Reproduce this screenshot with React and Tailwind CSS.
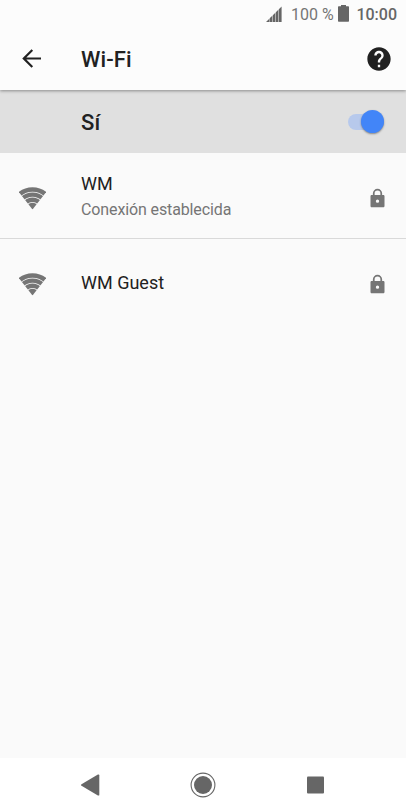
function SignalIcon() {
  return (
    <svg className="h-4 w-4 -translate-y-px" viewBox="0 0 16 16" fill="#666">
      <path d="M0 16 3.3 12.7V16ZM3.7 12.3 6.3 9.7V16H3.7ZM6.8 9.2 9.3 6.7V16H6.8ZM9.8 6.2 12.3 3.7V16H9.8ZM12.8 3.2 15.6 .4V16H12.8Z" />
    </svg>
  );
}

function BatteryIcon() {
  return (
    <svg className="h-[17px] w-[11px]" viewBox="0 0 11 17" fill="#666">
      <path d="M3 0H8V1.2H10.3A.7.7 0 0 1 11 1.9V16A.7.7 0 0 1 10.3 16.7H.7A.7.7 0 0 1 0 16V1.9A.7.7 0 0 1 .7 1.2H3Z" />
    </svg>
  );
}

function WifiIcon() {
  return (
    <svg className="h-[23px] w-[27px] shrink-0" viewBox="-13.5 -22.5 27 23">
      <defs>
        <clipPath id="wedge">
          <path d="M0 0 -15.6 -20 V-24 H15.6 V-20Z" />
        </clipPath>
      </defs>
      <g clipPath="url(#wedge)" fill="none" stroke="#757575">
        <circle r="20" strokeWidth="4.5" />
        <circle r="14.9" strokeWidth="4.4" />
        <circle r="9.8" strokeWidth="4.4" />
        <circle r="3.4" strokeWidth="6.8" />
      </g>
    </svg>
  );
}

function LockIcon() {
  return (
    <svg className="h-[21px] w-[21px]" viewBox="0 0 24 24" fill="#757575">
      <path
        fillRule="evenodd"
        d="M18.5 8H17.3V6.2a5.3 5.3 0 0 0-10.6 0V8H5.5c-.9 0-1.5.6-1.5 1.5v11c0 .9.6 1.5 1.5 1.5h13c.9 0 1.5-.6 1.5-1.5v-11c0-.9-.6-1.5-1.5-1.5zM15.3 8H8.7V6.2a3.3 3.3 0 0 1 6.6 0zM12 13.1a1.9 1.9 0 1 1 0 3.8a1.9 1.9 0 1 1 0-3.8z"
      />
    </svg>
  );
}

function Network({ name, status }) {
  return (
    <div className="flex h-[85px] shrink-0 items-center pt-[5px] pr-[18px] pl-[19px]">
      <WifiIcon />
      <div className="ml-[35px] flex-1 -translate-y-px">
        <div className="-translate-y-px text-[18px] leading-[25px] text-[#212121]">{name}</div>
        {status && (
          <div className="text-[16px] leading-[26px] tracking-[-0.12px] text-[#757575]">{status}</div>
        )}
      </div>
      <LockIcon />
    </div>
  );
}

export default function App() {
  return (
    <div className="flex h-[812px] w-[406px] flex-col overflow-hidden bg-[#fafafa] font-[Roboto,sans-serif]">
      <div className="relative shrink-0 bg-[#fcfcfc] shadow-[0_1px_3px_rgba(0,0,0,0.38)]">
        <div className="flex h-7 items-center pt-px pr-[9px] pl-[266px] text-[16px] leading-7 text-[#666]">
          <SignalIcon />
          <span className="ml-[9px] whitespace-nowrap text-[#757575]">100 %</span>
          <span className="ml-auto -translate-y-px translate-x-px">
            <BatteryIcon />
          </span>
          <span className="ml-2 font-medium">10:00</span>
        </div>
        <header className="flex h-[62px] items-center pr-[13px] pl-5">
          <svg className="h-6 w-6" viewBox="0 0 24 24" fill="none" stroke="#212121" strokeWidth="2.2">
            <path d="M21 11.5H4M12.3 3 3.8 11.5l8.5 8.5" />
          </svg>
          <h1 className="ml-[37px] flex-1 pt-px text-[22px] font-medium tracking-[0.1px] text-[#212121]">Wi-Fi</h1>
          <svg className="h-7 w-7" viewBox="0 0 24 24" fill="#212121">
            <path d="M12 2C6.48 2 2 6.48 2 12s4.48 10 10 10 10-4.48 10-10S17.52 2 12 2zm1 17h-2v-2h2v2zm2.07-7.75l-.9.92C13.45 12.9 13 13.5 13 15h-2v-.5c0-1.1.45-2.1 1.17-2.83l1.24-1.26c.37-.36.59-.86.59-1.41 0-1.1-.9-2-2-2s-2 .9-2 2H8c0-2.21 1.79-4 4-4s4 1.79 4 4c0 .88-.36 1.68-.93 2.25z" />
          </svg>
        </header>
      </div>
      <div className="flex h-[63px] shrink-0 items-center justify-between bg-[#e0e0e0] pr-[22px] pl-[81px]">
        <span className="pt-0.5 text-[22px] font-medium tracking-[0.1px] text-[#212121]">Sí</span>
        <div className="flex h-4 w-9 items-center justify-end rounded-full bg-[#b7c9ec]">
          <div className="h-[23px] w-[23px] shrink-0 rounded-full bg-[#4285f8] shadow-[0_1px_2px_rgba(0,0,0,0.4)]" />
        </div>
      </div>
      <Network name="WM" status="Conexión establecida" />
      <div className="h-px shrink-0 bg-[#d9d9d9]" />
      <Network name="WM Guest" />
      <nav className="mt-auto flex h-[54px] shrink-0 items-center justify-between bg-white pr-[82px] pl-20">
        <svg className="h-[22px] w-5" viewBox="0 0 20 22" fill="#666">
          <path d="M1.5 10.2 17.9.6Q19.3 0 19.3 1.3V20.7Q19.3 22 17.9 21.4L1.5 11.8Q.2 11 1.5 10.2Z" />
        </svg>
        <svg className="h-[26px] w-[26px] -translate-x-px" viewBox="0 0 26 26">
          <circle cx="13" cy="13" r="11.9" fill="none" stroke="#666" strokeWidth="1.1" />
          <circle cx="13" cy="13" r="9" fill="#666" />
        </svg>
        <div className="h-[17px] w-[17px] -translate-y-[0.5px] rounded-[1px] bg-[#666]" />
      </nav>
    </div>
  );
}
